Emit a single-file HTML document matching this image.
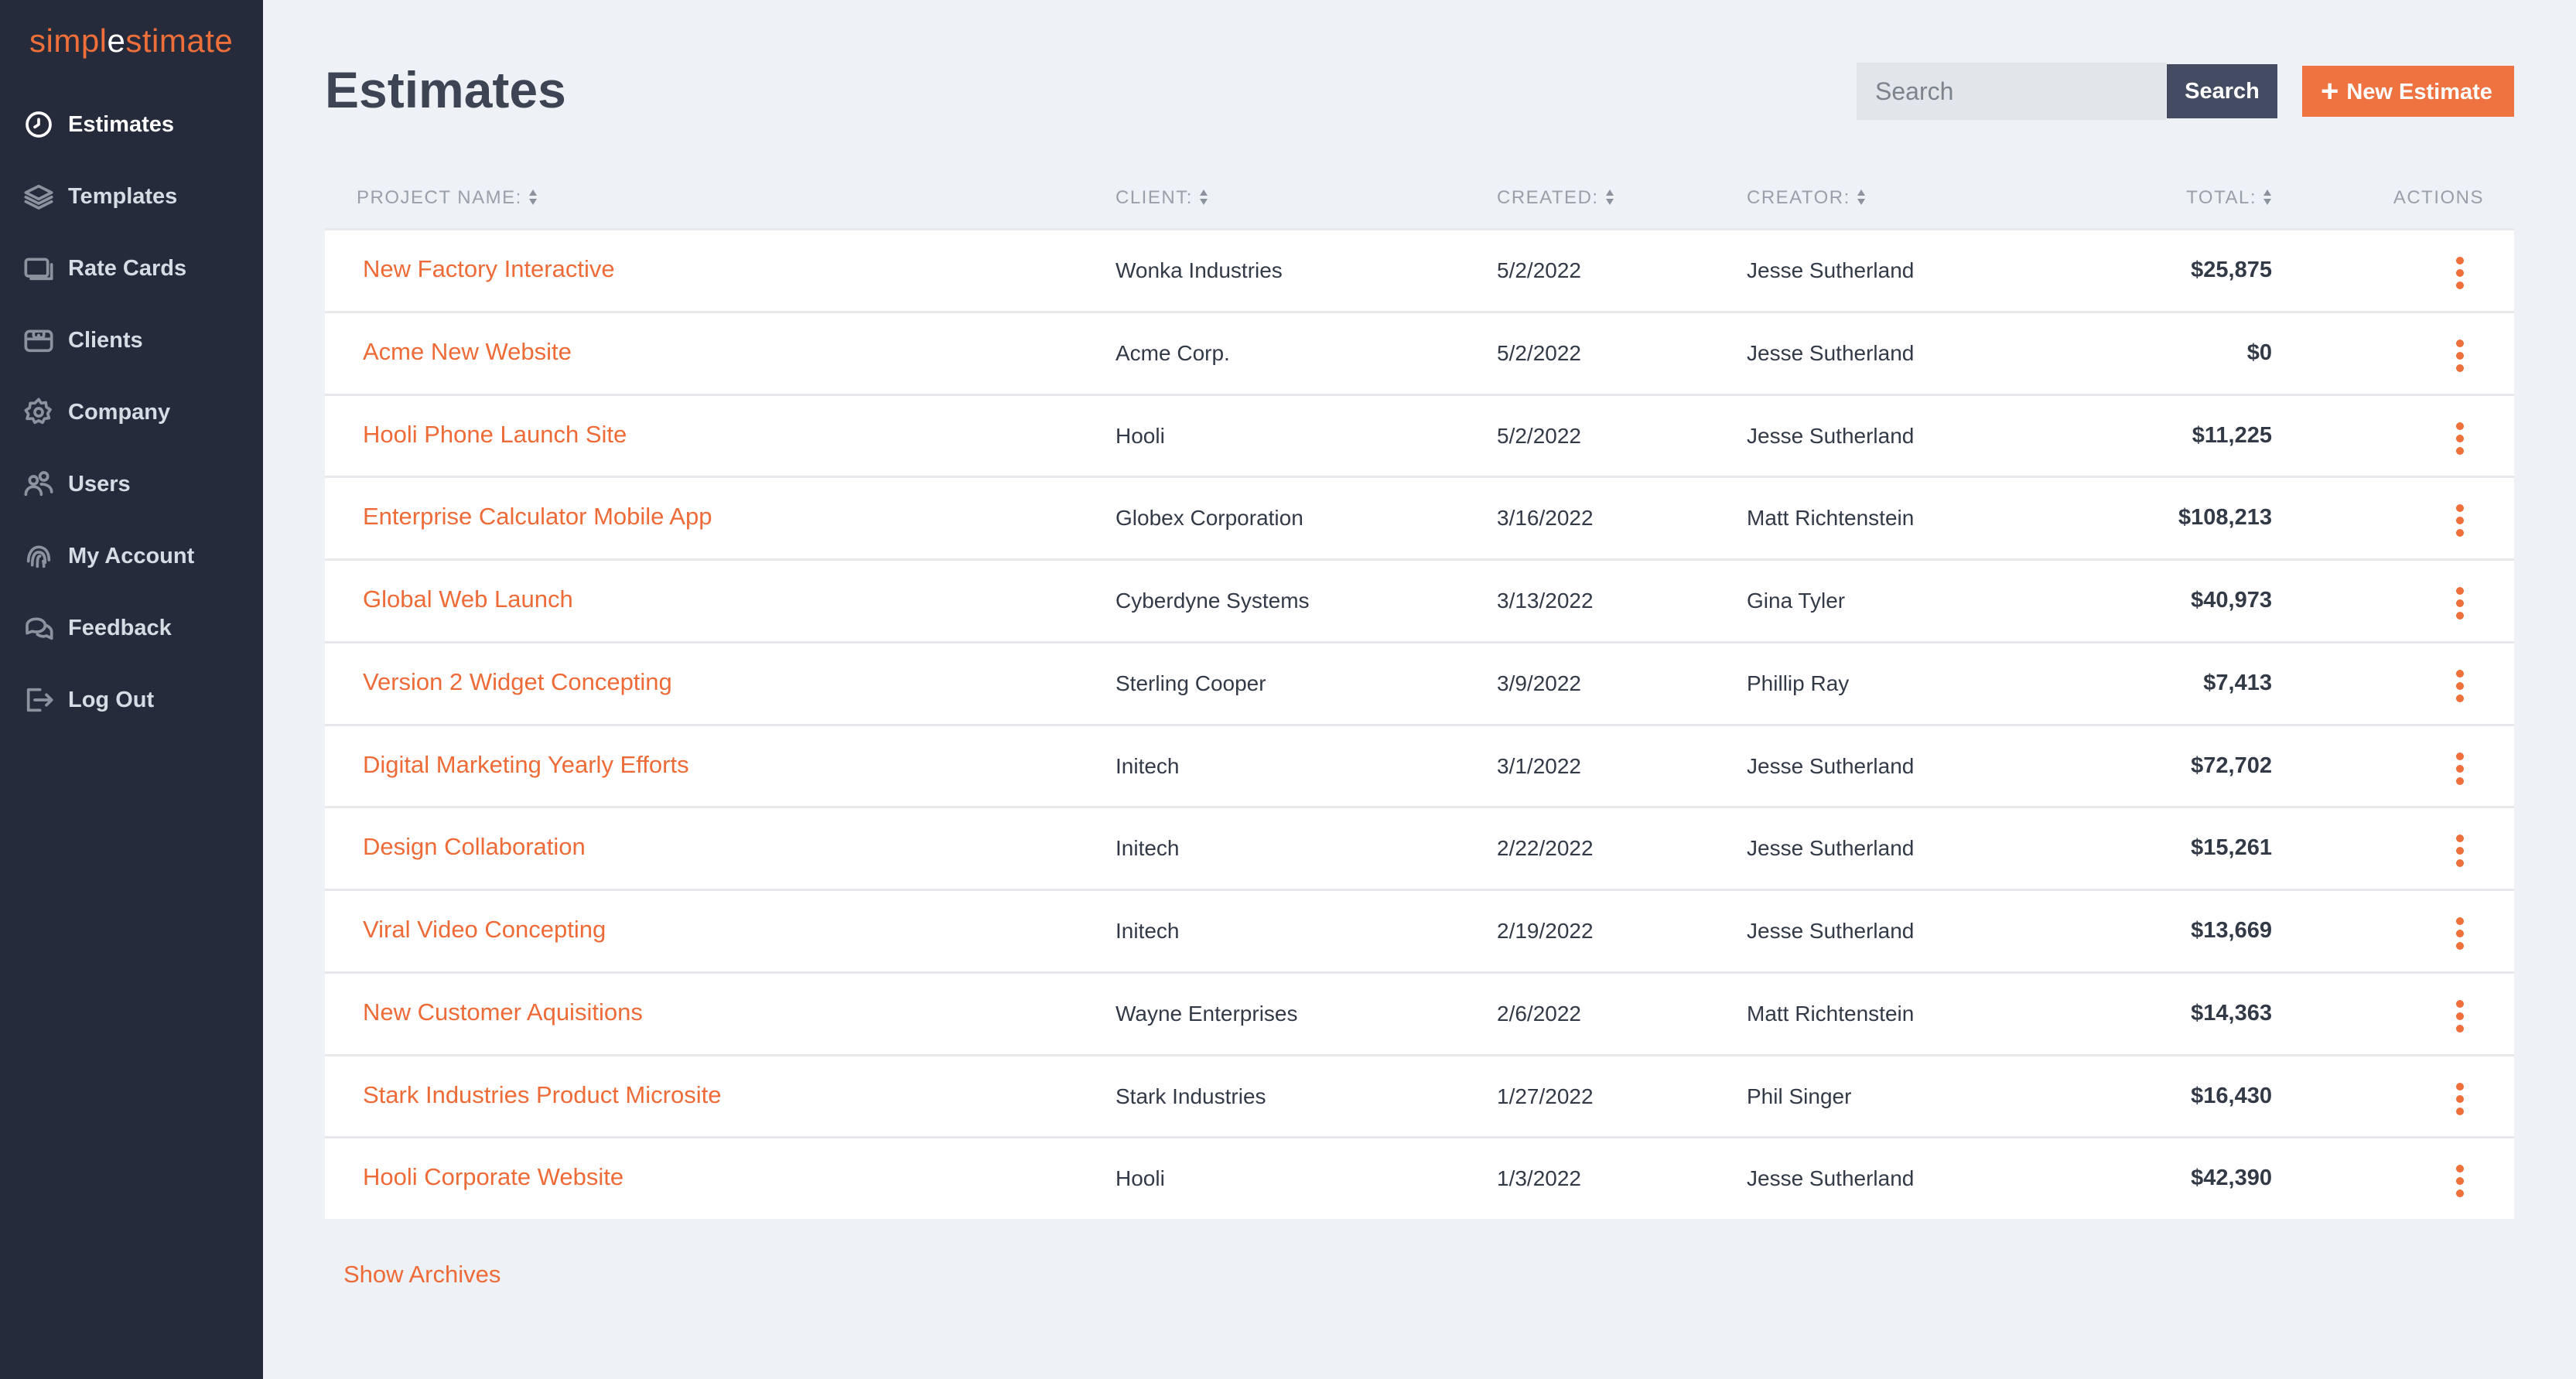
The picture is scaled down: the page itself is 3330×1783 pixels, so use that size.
<!DOCTYPE html>
<html><head><meta charset="utf-8">
<style>
*{box-sizing:border-box;margin:0;padding:0}
body{width:3330px;height:1783px;overflow:hidden;background:#eef1f6;font-family:"Liberation Sans",sans-serif;position:relative}
.side{position:absolute;left:0;top:0;width:340px;height:1783px;background:#262b3b}
.logo{position:absolute;left:38px;top:29px;font-size:42px;color:#ee6f3a;letter-spacing:0.5px}
.logo b{font-weight:normal;color:#fff}
.item{position:absolute;left:30px;height:50px;display:flex;align-items:center;color:#d7dbe3;font-weight:bold;font-size:29px;white-space:nowrap}
.item svg{width:40px;height:40px;margin-right:18px;fill:none;stroke:#8d939e;stroke-width:2.2;stroke-linecap:round;stroke-linejoin:round}
.item.act{color:#fff}.item.act svg{stroke:#fff}
h1{position:absolute;left:420px;top:78px;font-size:66px;color:#3d4555;font-weight:bold}
.sin{position:absolute;left:2400px;top:81px;width:400px;height:74px;background:#e2e6ea;color:#7d838d;font-size:32px;padding-left:24px;line-height:74px}
.sbtn{position:absolute;left:2801px;top:83px;width:143px;height:70px;background:#434c60;color:#fff;font-weight:bold;font-size:29px;text-align:center;line-height:70px}
.nbtn{position:absolute;left:2976px;top:85px;width:274px;height:66px;background:#ee7340;color:#fff;font-weight:bold;font-size:29px;line-height:66px;padding-left:24px}
.nbtn span{font-size:40px;vertical-align:-3px;margin-right:10px}
.th{position:absolute;top:242px;font-size:24px;color:#9aa0ab;letter-spacing:1.5px;white-space:nowrap}
.arr{display:inline-block;width:12px;height:22px;vertical-align:-3px;margin-left:8px}
.table{position:absolute;left:420px;top:295px;width:2830px;background:#fff}
.row{position:relative;height:106.75px;border-top:3px solid #e6e8ec}
.row div{position:absolute;top:0;line-height:103px;font-size:28px;color:#333a47;white-space:nowrap}
.row .p{left:49px;color:#ee6b38;font-size:31px;line-height:99px}
.row .c{left:1022px}.row .d{left:1515px}.row .u{left:1838px}
.row .t{right:313px;font-weight:bold;font-size:29px}
.dots{position:absolute;left:2755px;top:34px;width:10px}
.dots i{display:block;width:10px;height:10px;border-radius:50%;background:#ee6f3a;margin-bottom:6px}
.arch{position:absolute;left:444px;top:1630px;color:#ee6b38;font-size:31px}
</style></head><body>
<div class="side">
<div class="logo">simpl<b>e</b>stimate</div>
<div class="item act" style="top:136px"><svg viewBox="0 0 24 24"><circle cx="12" cy="12" r="9"/><path d="M12 8v4l-3 2"/></svg>Estimates</div>
<div class="item" style="top:229px"><svg viewBox="0 0 24 24"><path d="M2 9l10-5 10 5-10 5z"/><path d="M2 12.5l10 5 10-5"/><path d="M2 16l10 5 10-5"/></svg>Templates</div>
<div class="item" style="top:322px"><svg viewBox="0 0 24 24"><rect x="2" y="5" width="17" height="13" rx="2"/><path d="M22 9v11H6"/></svg>Rate Cards</div>
<div class="item" style="top:415px"><svg viewBox="0 0 24 24"><rect x="2" y="5" width="20" height="15" rx="3"/><path d="M2 11h20M8 5v3a2 2 0 004 0 2 2 0 004 0V5"/></svg>Clients</div>
<div class="item" style="top:508px"><svg viewBox="0 0 24 24"><circle cx="12" cy="12" r="3"/><path d="M12 2l2 3 3.5-.5.5 3.5 3 2-2 3 1 3.5-3.5.5-1.5 3-3-1.5-3 1.5-1.5-3L3 17l1-3.5-2-3 3-2 .5-3.5L9 5z"/></svg>Company</div>
<div class="item" style="top:601px"><svg viewBox="0 0 24 24"><circle cx="8" cy="9" r="3"/><circle cx="16" cy="6" r="3"/><path d="M2 20c0-4 3-6 6-6s6 2 6 6M14 12c4 0 8 2 8 6"/></svg>Users</div>
<div class="item" style="top:694px"><svg viewBox="0 0 24 24"><path d="M4 16c0-6 3-11 8-11s8 4 8 10M7 19c0-5 1-10 5-10s5 4 5 8M11 20c0-4 0-8 2-8M16 20c0-2 0-3-.5-4"/></svg>My Account</div>
<div class="item" style="top:787px"><svg viewBox="0 0 24 24"><path d="M3 10c0-3 3-5 7-5s7 2 7 5-3 5-7 5c-1 0-2 0-3-.5L3 16z"/><path d="M18 10c2 1 4 2.5 4 5v5l-4-2c-2 1-5 .5-7-1"/></svg>Feedback</div>
<div class="item" style="top:880px"><svg viewBox="0 0 24 24"><path d="M13 4H4v16h9M9 12h13M18 8l4 4-4 4"/></svg>Log Out</div>
</div>
<h1>Estimates</h1>
<div class="sin">Search</div>
<div class="sbtn">Search</div>
<div class="nbtn"><span>+</span>New Estimate</div>
<svg width="0" height="0" style="position:absolute"><defs><symbol id="a" viewBox="0 0 12 22"><path d="M6 1l5 8H1z M6 21l5-8H1z" fill="#8d939e"/></symbol></defs></svg>
<div class="th" style="left:461px">PROJECT NAME:<svg class="arr"><use href="#a"/></svg></div>
<div class="th" style="left:1442px">CLIENT:<svg class="arr"><use href="#a"/></svg></div>
<div class="th" style="left:1935px">CREATED:<svg class="arr"><use href="#a"/></svg></div>
<div class="th" style="left:2258px">CREATOR:<svg class="arr"><use href="#a"/></svg></div>
<div class="th" style="right:393px">TOTAL:<svg class="arr"><use href="#a"/></svg></div>
<div class="th" style="right:119px">ACTIONS</div>
<div class="table">
<div class="row"><div class="p">New Factory Interactive</div><div class="c">Wonka Industries</div><div class="d">5/2/2022</div><div class="u">Jesse Sutherland</div><div class="t">$25,875</div><span class="dots"><i></i><i></i><i></i></span></div>
<div class="row"><div class="p">Acme New Website</div><div class="c">Acme Corp.</div><div class="d">5/2/2022</div><div class="u">Jesse Sutherland</div><div class="t">$0</div><span class="dots"><i></i><i></i><i></i></span></div>
<div class="row"><div class="p">Hooli Phone Launch Site</div><div class="c">Hooli</div><div class="d">5/2/2022</div><div class="u">Jesse Sutherland</div><div class="t">$11,225</div><span class="dots"><i></i><i></i><i></i></span></div>
<div class="row"><div class="p">Enterprise Calculator Mobile App</div><div class="c">Globex Corporation</div><div class="d">3/16/2022</div><div class="u">Matt Richtenstein</div><div class="t">$108,213</div><span class="dots"><i></i><i></i><i></i></span></div>
<div class="row"><div class="p">Global Web Launch</div><div class="c">Cyberdyne Systems</div><div class="d">3/13/2022</div><div class="u">Gina Tyler</div><div class="t">$40,973</div><span class="dots"><i></i><i></i><i></i></span></div>
<div class="row"><div class="p">Version 2 Widget Concepting</div><div class="c">Sterling Cooper</div><div class="d">3/9/2022</div><div class="u">Phillip Ray</div><div class="t">$7,413</div><span class="dots"><i></i><i></i><i></i></span></div>
<div class="row"><div class="p">Digital Marketing Yearly Efforts</div><div class="c">Initech</div><div class="d">3/1/2022</div><div class="u">Jesse Sutherland</div><div class="t">$72,702</div><span class="dots"><i></i><i></i><i></i></span></div>
<div class="row"><div class="p">Design Collaboration</div><div class="c">Initech</div><div class="d">2/22/2022</div><div class="u">Jesse Sutherland</div><div class="t">$15,261</div><span class="dots"><i></i><i></i><i></i></span></div>
<div class="row"><div class="p">Viral Video Concepting</div><div class="c">Initech</div><div class="d">2/19/2022</div><div class="u">Jesse Sutherland</div><div class="t">$13,669</div><span class="dots"><i></i><i></i><i></i></span></div>
<div class="row"><div class="p">New Customer Aquisitions</div><div class="c">Wayne Enterprises</div><div class="d">2/6/2022</div><div class="u">Matt Richtenstein</div><div class="t">$14,363</div><span class="dots"><i></i><i></i><i></i></span></div>
<div class="row"><div class="p">Stark Industries Product Microsite</div><div class="c">Stark Industries</div><div class="d">1/27/2022</div><div class="u">Phil Singer</div><div class="t">$16,430</div><span class="dots"><i></i><i></i><i></i></span></div>
<div class="row"><div class="p">Hooli Corporate Website</div><div class="c">Hooli</div><div class="d">1/3/2022</div><div class="u">Jesse Sutherland</div><div class="t">$42,390</div><span class="dots"><i></i><i></i><i></i></span></div>
</div>
<div class="arch">Show Archives</div>
</body></html>
